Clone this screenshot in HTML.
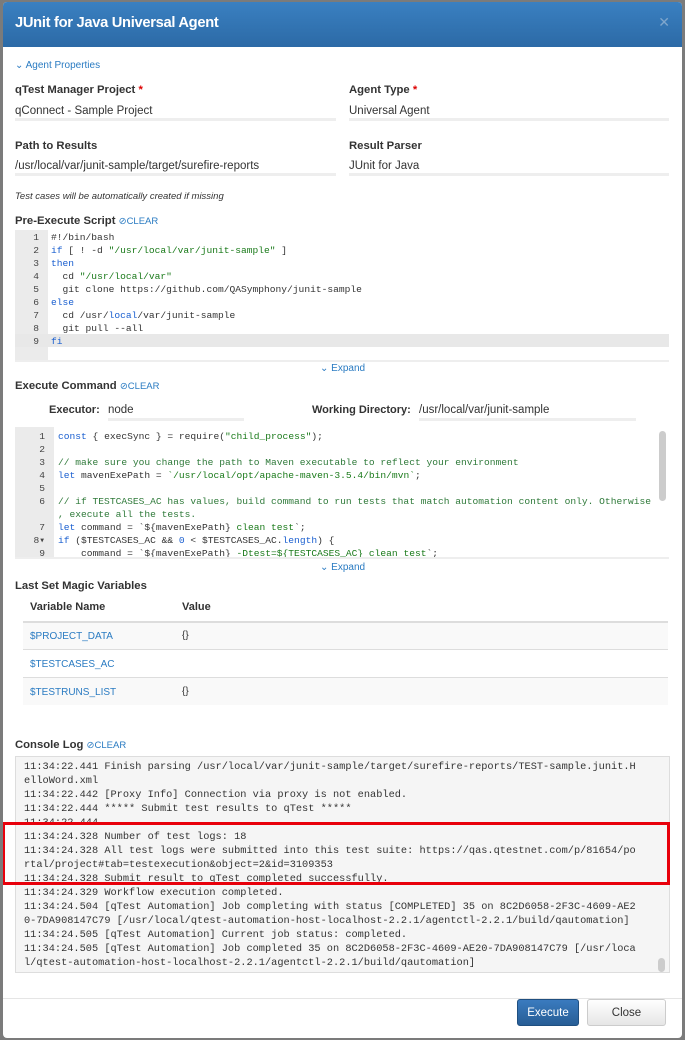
<!DOCTYPE html>
<html><head><meta charset="utf-8"><style>
*{margin:0;padding:0;box-sizing:border-box}
body{width:685px;height:1040px;background:#7b7b7b;font-family:"Liberation Sans",sans-serif;position:relative;overflow:hidden}
.dlg{position:absolute;left:3px;top:2px;width:679px;height:1036px;background:#fff;border-radius:4px;overflow:hidden}
.hd{position:absolute;left:0;top:0;width:679px;height:45px;background:linear-gradient(#3a80c1,#2c6aa6);}
.hd h1{position:absolute;left:12px;top:13px;font-size:14.7px;color:#fff;font-weight:bold;letter-spacing:-0.3px}
.hd .x{position:absolute;right:12px;top:12px;color:#7fa6cc;font-size:14px}
.a{position:absolute;white-space:pre}
.lb{font-size:11.3px;font-weight:bold;color:#333}
.v{font-size:11.5px;color:#333}
.ul{position:absolute;height:3px;background:#eee}
.blue{color:#2a7bc2}
.clr{font-size:9.5px;color:#2a7bc2;font-weight:normal}
.ed{position:absolute;background:#fff;border-bottom:2px solid #eee}
.gut{position:absolute;left:0;top:0;bottom:0;background:#ebebeb}
.code{font-family:"Liberation Mono",monospace;font-size:9.6px;line-height:13px;color:#333}
.ln{position:absolute;font-family:"Liberation Mono",monospace;font-size:9.6px;line-height:13px;color:#444;text-align:right}
.k{color:#1a5fd0}.s{color:#1a7a1a}.c{color:#2f7a3a}
.con{position:absolute;left:12px;top:754px;width:655px;height:217px;background:#f5f5f5;border:1px solid #ddd;font-family:"Liberation Mono",monospace;font-size:10.3px;line-height:14px;color:#333;padding:3px 0 0 8px;white-space:pre}
.btn{position:absolute;height:27px;border-radius:3px;font-size:11.5px;text-align:center;line-height:26px}
</style></head><body>
<div class="dlg">
<div class="hd"><h1>JUnit for Java Universal Agent</h1><span class="x">✕</span></div>
<div class="a blue" style="left:12px;top:58px;font-size:10px">⌄ Agent Properties</div>
<div class="a lb" style="left:12px;top:82px">qTest Manager Project <span style="color:#d00">*</span></div>
<div class="a lb" style="left:346px;top:82px">Agent Type <span style="color:#d00">*</span></div>
<div class="a v" style="left:12px;top:103px">qConnect - Sample Project</div>
<div class="a v" style="left:346px;top:103px">Universal Agent</div>
<div class="ul" style="left:12px;top:116px;width:321px"></div>
<div class="ul" style="left:346px;top:116px;width:320px"></div>
<div class="a lb" style="left:12px;top:138px">Path to Results</div>
<div class="a lb" style="left:346px;top:138px">Result Parser</div>
<div class="a v" style="left:12px;top:158px">/usr/local/var/junit-sample/target/surefire-reports</div>
<div class="a v" style="left:346px;top:158px">JUnit for Java</div>
<div class="ul" style="left:12px;top:171px;width:321px"></div>
<div class="ul" style="left:346px;top:171px;width:320px"></div>
<div class="a" style="left:12px;top:189px;font-size:9.5px;font-style:italic;color:#333">Test cases will be automatically created if missing</div>
<div class="a lb" style="left:12px;top:213px">Pre-Execute Script <span class="clr">⊘CLEAR</span></div>

<div class="ed" style="left:12px;top:228px;width:654px;height:132px">
<div class="gut" style="width:33px"></div>
<div style="position:absolute;left:0;top:104px;width:654px;height:13px;background:#e8e8e8"></div>
<div class="ln" style="left:0;top:1px;width:24px">1<br>2<br>3<br>4<br>5<br>6<br>7<br>8<br>9</div>
<div class="a code" style="left:36px;top:1px">#!/bin/bash
<span class="k">if</span> [ ! -d <span class="s">"/usr/local/var/junit-sample"</span> ]
<span class="k">then</span>
  cd <span class="s">"/usr/local/var"</span>
  git clone https://github.com/QASymphony/junit-sample
<span class="k">else</span>
  cd /usr/<span class="k">local</span>/var/junit-sample
  git pull --all
<span class="k">fi</span></div>
</div>
<div class="a blue" style="left:317px;top:361px;font-size:10px">⌄ Expand</div>

<div class="a lb" style="left:12px;top:378px">Execute Command <span class="clr">⊘CLEAR</span></div>
<div class="a lb" style="left:46px;top:402px;font-size:11px">Executor:</div>
<div class="a v" style="left:105px;top:402px">node</div>
<div class="ul" style="left:105px;top:416px;width:136px"></div>
<div class="a lb" style="left:309px;top:402px;font-size:11px">Working Directory:</div>
<div class="a v" style="left:416px;top:402px">/usr/local/var/junit-sample</div>
<div class="ul" style="left:416px;top:416px;width:217px"></div>

<div class="ed" style="left:12px;top:425px;width:654px;height:132px;overflow:hidden">
<div class="gut" style="width:39px"></div>
<div style="position:absolute;right:3px;top:4px;width:7px;height:70px;background:#ccc;border-radius:4px"></div>
<div class="ln" style="left:0;top:3px;width:30px">1<br>2<br>3<br>4<br>5<br>6<br><br>7<br>8▾<br>9</div>
<div class="a code" style="left:43px;top:3px"><span class="k">const</span> { execSync } = require(<span class="s">"child_process"</span>);

<span class="c">// make sure you change the path to Maven executable to reflect your environment</span>
<span class="k">let</span> mavenExePath = <span class="s">`/usr/local/opt/apache-maven-3.5.4/bin/mvn`</span>;

<span class="c">// if TESTCASES_AC has values, build command to run tests that match automation content only. Otherwise</span>
<span class="c">, execute all the tests.</span>
<span class="k">let</span> command = `${mavenExePath} <span class="s">clean test</span>`;
<span class="k">if</span> ($TESTCASES_AC &amp;&amp; <span class="k">0</span> &lt; $TESTCASES_AC.<span class="k">length</span>) {
    command = `${mavenExePath} <span class="s">-Dtest=${TESTCASES_AC} clean test</span>`;</div>
</div>
<div class="a blue" style="left:317px;top:560px;font-size:10px">⌄ Expand</div>

<div class="a lb" style="left:12px;top:578px">Last Set Magic Variables</div>
<div class="a lb" style="left:27px;top:599px;font-size:11px">Variable Name</div>
<div class="a lb" style="left:179px;top:599px;font-size:11px">Value</div>
<div style="position:absolute;left:20px;top:619px;width:645px;height:2px;background:#ddd"></div>
<div style="position:absolute;left:20px;top:621px;width:645px;height:27px;background:#f9f9f9;border-bottom:1px solid #ddd"></div>
<div style="position:absolute;left:20px;top:648px;width:645px;height:28px;border-bottom:1px solid #ddd"></div>
<div style="position:absolute;left:20px;top:676px;width:645px;height:27px;background:#f9f9f9"></div>
<div class="a blue" style="left:27px;top:629px;font-size:10px">$PROJECT_DATA</div>
<div class="a v" style="left:179px;top:628px;font-size:10px">{}</div>
<div class="a blue" style="left:27px;top:657px;font-size:10px">$TESTCASES_AC</div>
<div class="a blue" style="left:27px;top:685px;font-size:10px">$TESTRUNS_LIST</div>
<div class="a v" style="left:179px;top:684px;font-size:10px">{}</div>

<div class="a lb" style="left:12px;top:737px">Console Log <span class="clr">⊘CLEAR</span></div>
<div class="con">11:34:22.441 Finish parsing /usr/local/var/junit-sample/target/surefire-reports/TEST-sample.junit.H
elloWord.xml
11:34:22.442 [Proxy Info] Connection via proxy is not enabled.
11:34:22.444 ***** Submit test results to qTest *****
11:34:22.444
11:34:24.328 Number of test logs: 18
11:34:24.328 All test logs were submitted into this test suite: https://qas.qtestnet.com/p/81654/po
rtal/project#tab=testexecution&amp;object=2&amp;id=3109353
11:34:24.328 Submit result to qTest completed successfully.
11:34:24.329 Workflow execution completed.
11:34:24.504 [qTest Automation] Job completing with status [COMPLETED] 35 on 8C2D6058-2F3C-4609-AE2
0-7DA908147C79 [/usr/local/qtest-automation-host-localhost-2.2.1/agentctl-2.2.1/build/qautomation]
11:34:24.505 [qTest Automation] Current job status: completed.
11:34:24.505 [qTest Automation] Job completed 35 on 8C2D6058-2F3C-4609-AE20-7DA908147C79 [/usr/loca
l/qtest-automation-host-localhost-2.2.1/agentctl-2.2.1/build/qautomation]</div>
<div style="position:absolute;left:655px;top:956px;width:7px;height:14px;background:#ccc;border-radius:4px"></div>
<div style="position:absolute;left:-1px;top:820px;width:668px;height:63px;border:3px solid #e8000b"></div>
<div style="position:absolute;left:0;top:996px;width:679px;height:1px;background:#e5e5e5"></div>
<div class="btn" style="left:514px;top:997px;width:62px;background:linear-gradient(#3a7bbf,#275d95);color:#fff;border:1px solid #1f4f80">Execute</div>
<div class="btn" style="left:584px;top:997px;width:79px;background:linear-gradient(#fff,#e6e6e6);color:#333;border:1px solid #ccc">Close</div>
</div>
</body></html>
